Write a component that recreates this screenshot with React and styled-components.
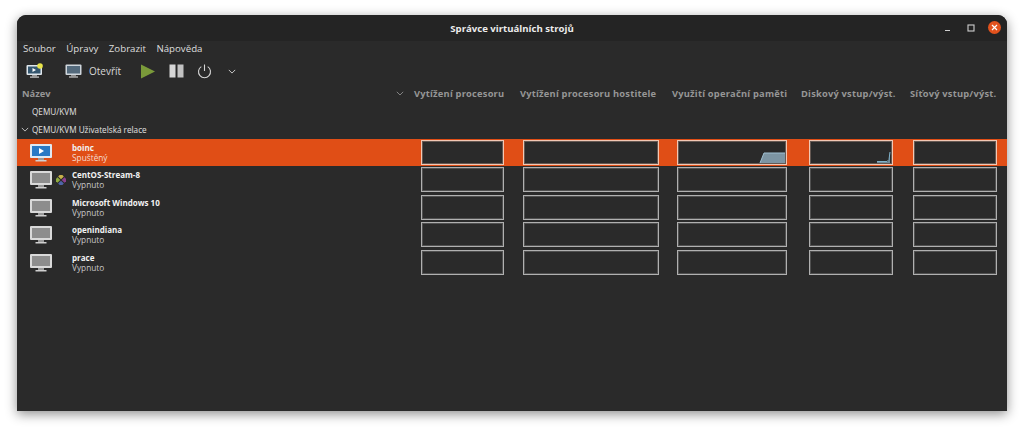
import React from "react";
import styled, { createGlobalStyle } from "styled-components";

const Global = createGlobalStyle`
  html, body { margin: 0; padding: 0; background: #fff; }
  body { font-family: "Open Sans", "Noto Sans", "Liberation Sans", sans-serif; }
`;

const Page = styled.div`
  width: 1024px;
  height: 430px;
  padding: 15px 17px 19px;
  box-sizing: border-box;
  overflow: hidden;
`;

const Win = styled.div`
  height: 396px;
  display: flex;
  flex-direction: column;
  background: #2a2a2a;
  border-radius: 9px 9px 0 0;
  box-shadow: 0 3px 12px rgba(0, 0, 0, 0.45);
  color: #e6e6e6;
  overflow: hidden;
`;

const TitleBar = styled.div`
  height: 26px;
  flex: none;
  display: flex;
  align-items: center;
  justify-content: center;
  position: relative;
  background: #242424;
  font-size: 9.6px;
  font-weight: 700;
  color: #ececec;
`;

const WinControls = styled.div`
  position: absolute;
  right: 6px;
  top: 6px;
  display: flex;
  align-items: center;
  gap: 12px;
`;

const CloseBtn = styled.div`
  width: 13px;
  height: 13px;
  border-radius: 50%;
  background: #e2521d;
  display: flex;
  align-items: center;
  justify-content: center;
`;

const MenuBar = styled.div`
  height: 17px;
  flex: none;
  display: flex;
  align-items: center;
  padding: 0 0 3px 6px;
  box-sizing: border-box;
  gap: 10.5px;
  font-size: 9.7px;
  color: #dedede;
  background: #2a2a2a;
`;

const Toolbar = styled.div`
  height: 26px;
  flex: none;
  display: flex;
  align-items: center;
  padding-left: 9px;
  font-size: 10px;
  color: #d8d8d8;
`;

const ToolIcon = styled.svg`
  flex: none;
  margin-left: ${(p) => p.$gap || 0}px;
`;

const ToolLabel = styled.span`
  margin-left: 7px;
`;

const Grid = styled.div`
  display: grid;
  grid-template-columns: 395px 104px 153px 130px 106px 102px;
`;

const HeaderRow = styled(Grid)`
  height: 19px;
  flex: none;
  align-items: center;
  font-size: 9.3px;
  font-weight: 700;
  color: #969696;
  white-space: nowrap;
`;

const NameHead = styled.div`
  display: flex;
  justify-content: space-between;
  align-items: center;
  padding: 0 8px 0 5px;
`;

const ColHead = styled.div`
  padding-left: ${(p) => p.$inset}px;
  letter-spacing: 0.22px;
`;

const GroupRow = styled.div`
  height: 18px;
  flex: none;
  display: flex;
  align-items: center;
  box-sizing: border-box;
  padding: 0 0 2px 15px;
  font-size: 8.2px;
  color: #e0e0e0;
  position: relative;
`;

const GroupChevron = styled.svg`
  position: absolute;
  left: 4px;
  top: 6px;
`;

const VmRow = styled(Grid)`
  height: 27px;
  margin-bottom: 0.5px;
  flex: none;
  background: ${(p) => (p.$selected ? "#e04e16" : "transparent")};
`;

const NameCell = styled.div`
  display: flex;
  align-items: center;
  padding-left: 13px;
  position: relative;
`;

const VmText = styled.div`
  margin-left: 20px;
  display: flex;
  flex-direction: column;
  line-height: 10px;
`;

const VmName = styled.span`
  font-size: 8px;
  font-weight: 700;
  color: #f2f2f2;
`;

const VmStatus = styled.span`
  font-size: 8.3px;
  color: ${(p) => (p.$selected ? "#f5dccf" : "#c8c8c8")};
`;

const Badge = styled.svg`
  position: absolute;
  left: 39px;
  top: 8px;
`;

const Cell = styled.div`
  margin: 0.8px 0 0 ${(p) => p.$inset}px;
  width: ${(p) => p.$w}px;
  height: 25px;
  box-sizing: border-box;
  border: 1px solid ${(p) => (p.$selected ? "#f2c8b4" : "#b0b0b0")};
  box-shadow: inset 0 0 0 1px ${(p) => (p.$selected ? "rgba(240,196,174,0.3)" : "rgba(170,170,170,0.3)")};
  background: #2a2a2a;
  position: relative;
`;

const Chart = styled.svg`
  position: absolute;
  right: 0;
  bottom: 0;
`;

const cols = [
  { title: "Vytížení procesoru", head: 2, inset: 9, w: 83 },
  { title: "Vytížení procesoru hostitele", head: 4, inset: 7, w: 136 },
  { title: "Využití operační paměti", head: 3, inset: 8, w: 110 },
  { title: "Diskový vstup/výst.", head: 2, inset: 10, w: 84 },
  { title: "Síťový vstup/výst.", head: 5, inset: 8, w: 84 },
];

const vms = [
  { name: "boinc", status: "Spuštěný", selected: true },
  { name: "CentOS-Stream-8", status: "Vypnuto", badge: true },
  { name: "Microsoft Windows 10", status: "Vypnuto" },
  { name: "openindiana", status: "Vypnuto" },
  { name: "prace", status: "Vypnuto" },
];

const Monitor = ({ running }) => (
  <svg width="22" height="18" viewBox="0 0 22 18">
    <rect x="0" y="0" width="22" height="14" rx="1" fill={running ? "#dfe9f2" : "#d9d9d9"} />
    <rect x="2" y="2" width="18" height="10" fill={running ? "#2a79c4" : "#8d8d8d"} />
    {running && <path d="M9 4l5 3-5 3z" fill="#fff" />}
    <rect x="8" y="14" width="6" height="2" fill="#9a9a9a" />
    <rect x="5.5" y="16" width="11" height="1.5" fill="#d0d0d0" />
  </svg>
);

const Chevron = ({ size = 8, color = "#8f8f8f" }) => (
  <svg width={size} height={size * 0.6} viewBox="0 0 10 6">
    <path d="M1 1l4 4 4-4" fill="none" stroke={color} strokeWidth="1.1" />
  </svg>
);

const MemChart = () => (
  <Chart width="28" height="12" viewBox="0 0 28 12">
    <path d="M2 11L6 1H27V11Z" fill="#7d95a3" />
    <path d="M2 11L6 1H27" fill="none" stroke="#9fc0d2" strokeWidth="1" />
  </Chart>
);

const DiskChart = () => (
  <Chart width="16" height="13" viewBox="0 0 16 13">
    <path d="M1 11H11L13 9L14 1V12H1Z" fill="#6f8a99" />
    <path d="M1 10.5H11L13 8.5L14 1" fill="none" stroke="#7fb2ca" strokeWidth="1" />
  </Chart>
);

export default function App() {
  return (
    <Page>
      <Global />
      <Win>
        <TitleBar>
          Správce virtuálních strojů
          <WinControls>
            <svg width="10" height="10" viewBox="0 0 10 10">
              <rect x="1" y="7" width="5" height="1" fill="#cfcfcf" />
            </svg>
            <svg width="10" height="10" viewBox="0 0 10 10">
              <rect x="2" y="2" width="6" height="6" fill="none" stroke="#cfcfcf" strokeWidth="1.1" />
            </svg>
            <CloseBtn>
              <svg width="7" height="7" viewBox="0 0 7 7">
                <path d="M1 1l5 5M6 1L1 6" stroke="#fff" strokeWidth="1.2" />
              </svg>
            </CloseBtn>
          </WinControls>
        </TitleBar>
        <MenuBar>
          <span>Soubor</span>
          <span>Úpravy</span>
          <span>Zobrazit</span>
          <span>Nápověda</span>
        </MenuBar>
        <Toolbar>
          <ToolIcon width="18" height="16" viewBox="0 0 18 16">
            <rect x="0.5" y="2" width="15.5" height="10" rx="1" fill="#dfe6ec" />
            <rect x="2" y="3.5" width="12.5" height="7" fill="#34566f" />
            <path d="M6.5 5l3.5 2-3.5 2z" fill="#fff" />
            <rect x="6" y="12" width="5" height="1.5" fill="#999" />
            <rect x="4" y="13.5" width="9" height="1.2" fill="#cfcfcf" />
            <circle cx="14" cy="3" r="2.8" fill="#e8e44a" />
          </ToolIcon>
          <ToolIcon $gap={21} width="17" height="14" viewBox="0 0 17 14">
            <rect x="0.5" y="0.5" width="16" height="10.5" rx="1" fill="#cfd6dc" />
            <rect x="2" y="2" width="13" height="7.5" fill="#546a7c" />
            <rect x="6" y="11" width="5" height="1.4" fill="#8c8c8c" />
            <rect x="4" y="12.4" width="9" height="1.2" fill="#c8c8c8" />
          </ToolIcon>
          <ToolLabel>Otevřít</ToolLabel>
          <ToolIcon $gap={19} width="15" height="15" viewBox="0 0 15 15">
            <path d="M1 0.5L15 7.5L1 14.5Z" fill="#7a9a3a" />
          </ToolIcon>
          <ToolIcon $gap={14} width="15" height="14" viewBox="0 0 15 14">
            <rect x="0.5" y="0.5" width="6" height="13" fill="#d6d6d6" />
            <rect x="8.5" y="0.5" width="6" height="13" fill="#c2c2c2" />
          </ToolIcon>
          <ToolIcon $gap={13} width="15" height="15" viewBox="0 0 15 15">
            <path d="M4.3 2.6a6 6 0 1 0 6.4 0M7.5 0.5V7" fill="none" stroke="#d6d6d6" strokeWidth="1.1" />
          </ToolIcon>
          <ToolIcon $gap={16} width="8" height="5" viewBox="0 0 10 6">
            <path d="M1 1l4 4 4-4" fill="none" stroke="#cfcfcf" strokeWidth="1.2" />
          </ToolIcon>
        </Toolbar>
        <HeaderRow>
          <NameHead>
            <span>Název</span>
            <Chevron />
          </NameHead>
          {cols.map((c) => (
            <ColHead key={c.title} $inset={c.head}>
              {c.title}
            </ColHead>
          ))}
        </HeaderRow>
        <GroupRow>QEMU/KVM</GroupRow>
        <GroupRow>
          <GroupChevron width="8" height="5" viewBox="0 0 10 6">
            <path d="M1 1l4 4 4-4" fill="none" stroke="#cfcfcf" strokeWidth="1.1" />
          </GroupChevron>
          QEMU/KVM Uživatelská relace
        </GroupRow>
        {vms.map((vm) => (
          <VmRow key={vm.name} $selected={vm.selected}>
            <NameCell>
              <Monitor running={vm.selected} />
              {vm.badge && (
                <Badge width="10" height="10" viewBox="0 0 10 10">
                  <rect x="0.5" y="0.5" width="4" height="4" transform="rotate(45 5 5)" fill="#c9b24a" />
                  <rect x="5.5" y="0.5" width="4" height="4" transform="rotate(45 5 5)" fill="#8c3f8e" />
                  <rect x="5.5" y="5.5" width="4" height="4" transform="rotate(45 5 5)" fill="#4f63a8" />
                  <rect x="0.5" y="5.5" width="4" height="4" transform="rotate(45 5 5)" fill="#8eaa3e" />
                </Badge>
              )}
              <VmText>
                <VmName>{vm.name}</VmName>
                <VmStatus $selected={vm.selected}>{vm.status}</VmStatus>
              </VmText>
            </NameCell>
            {cols.map((c, i) => (
              <Cell key={c.title} $inset={c.inset} $w={c.w} $selected={vm.selected}>
                {vm.selected && i === 2 && <MemChart />}
                {vm.selected && i === 3 && <DiskChart />}
              </Cell>
            ))}
          </VmRow>
        ))}
      </Win>
    </Page>
  );
}
